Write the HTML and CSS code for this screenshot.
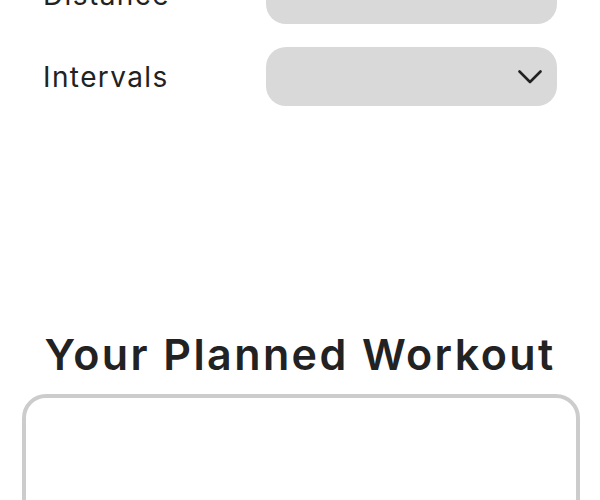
FILE: index.html
```html
<!DOCTYPE html>
<html lang="en">
<head>
    <meta charset="UTF-8">
    <meta name="viewport" content="width=device-width, initial-scale=1.0">
    <title>Workout Planner</title>
    <link rel="stylesheet" href="styles.css">
</head>
<body>
    <main class="page">
        <form class="plan-form">
            <div class="field-row">
                <label for="distance">Distance</label>
                <input type="text" id="distance" class="field">
            </div>
            <div class="field-row">
                <label for="intervals">Intervals</label>
                <div class="select-wrap">
                    <select id="intervals" class="field">
                        <option value=""></option>
                    </select>
                    <svg class="chevron" width="24" height="14" viewBox="0 0 24 14" aria-hidden="true">
                        <path d="M1.5 1.5 L12 12 L22.5 1.5" fill="none" stroke="#222" stroke-width="2.6" stroke-linecap="round" stroke-linejoin="round"/>
                    </svg>
                </div>
            </div>
        </form>

        <section class="planned">
            <h2>Your Planned Workout</h2>
            <div class="workout-box"></div>
        </section>
    </main>
</body>
</html>
```

FILE: styles.css
```css
body {
    margin: 0;
    font-family: Inter, "Noto Sans", sans-serif;
    color: #222;
    background-color: #fff;
}
.page {
    overflow: hidden;
}
.plan-form {
    margin-top: -35px;
    display: flex;
    flex-direction: column;
    gap: 23px;
}
.field-row {
    display: grid;
    grid-template-columns: 1fr 291px;
    align-items: center;
    padding: 0 43px 0 43px;
}
label {
    font-size: 28px;
    letter-spacing: 1.4px;
    color: #222;
}
.field {
    display: block;
    width: 100%;
    height: 59px;
    border: none;
    border-radius: 20px;
    background-color: #d9d9d9;
    box-sizing: border-box;
    padding: 0 50px 0 18px;
    font: inherit;
    font-size: 22px;
    appearance: none;
    -webkit-appearance: none;
    outline: none;
}
.select-wrap {
    position: relative;
}
.chevron {
    position: absolute;
    right: 15px;
    top: 23px;
    pointer-events: none;
}
.planned {
    margin-top: 222px;
}
h2 {
    margin: 0 0 14px;
    text-align: center;
    font-size: 43px;
    font-weight: 600;
    letter-spacing: 2.4px;
    line-height: 52px;
    color: #222;
}
.workout-box {
    height: 300px;
    margin: 0 20px 0 22px;
    border: 4px solid #ccc;
    border-radius: 24px;
}
```
